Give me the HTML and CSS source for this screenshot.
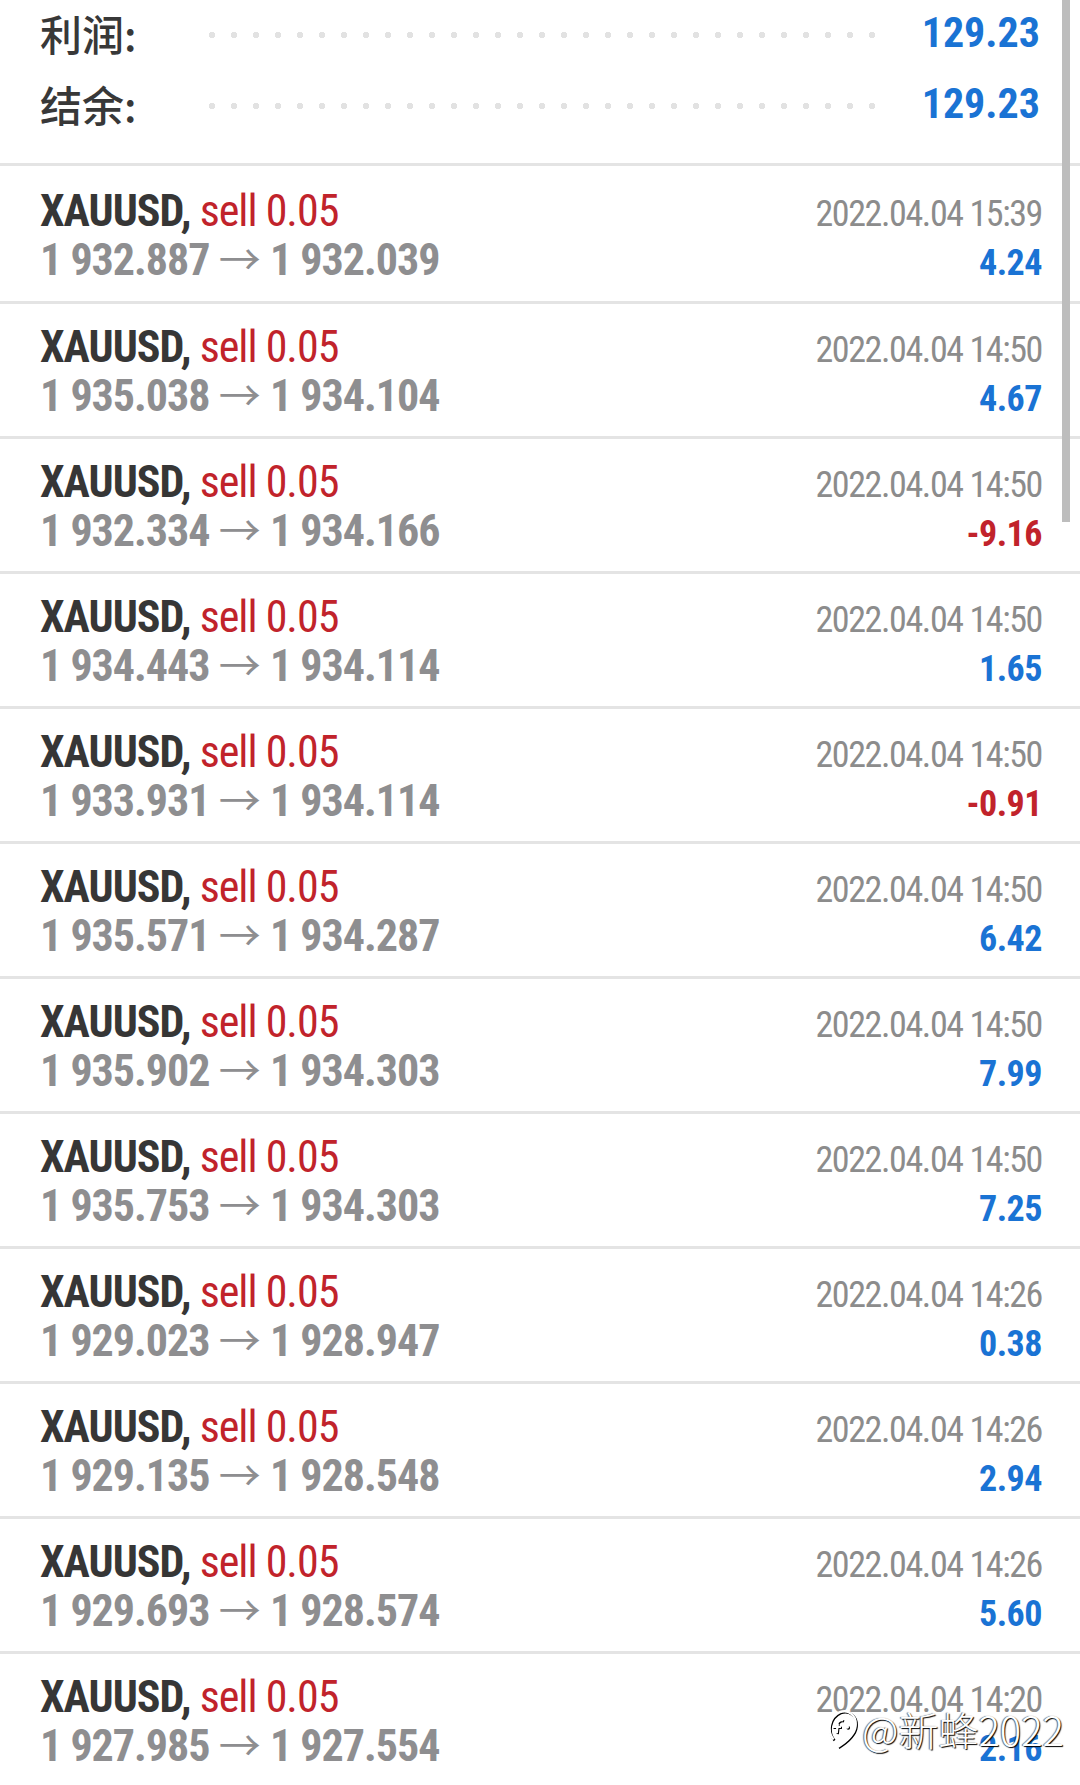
FILE: index.html
```html
<!DOCTYPE html>
<html lang="zh-CN">
<head>
  <meta charset="UTF-8">
  <meta name="viewport" content="width=device-width, initial-scale=1.0">
  <title>历史</title>
  <link rel="stylesheet" href="styles.css">
</head>
<body>

  <div class="summary">
    <div class="summary-row">
      <span class="summary-label">利润:</span>
      <span class="leader"></span>
      <span class="summary-value">129.23</span>
    </div>
    <div class="summary-row">
      <span class="summary-label">结余:</span>
      <span class="leader"></span>
      <span class="summary-value">129.23</span>
    </div>
  </div>

  <ul class="deals">
    <li class="deal">
      <div class="deal-title">XAUUSD, <span class="sell">sell 0.05</span></div>
      <div class="deal-time">2022.04.04 15:39</div>
      <div class="deal-price">1 932.887 <span class="arrow">→</span> 1 932.039</div>
      <div class="deal-profit">4.24</div>
    </li>
    <li class="deal">
      <div class="deal-title">XAUUSD, <span class="sell">sell 0.05</span></div>
      <div class="deal-time">2022.04.04 14:50</div>
      <div class="deal-price">1 935.038 <span class="arrow">→</span> 1 934.104</div>
      <div class="deal-profit">4.67</div>
    </li>
    <li class="deal">
      <div class="deal-title">XAUUSD, <span class="sell">sell 0.05</span></div>
      <div class="deal-time">2022.04.04 14:50</div>
      <div class="deal-price">1 932.334 <span class="arrow">→</span> 1 934.166</div>
      <div class="deal-profit loss">-9.16</div>
    </li>
    <li class="deal">
      <div class="deal-title">XAUUSD, <span class="sell">sell 0.05</span></div>
      <div class="deal-time">2022.04.04 14:50</div>
      <div class="deal-price">1 934.443 <span class="arrow">→</span> 1 934.114</div>
      <div class="deal-profit">1.65</div>
    </li>
    <li class="deal">
      <div class="deal-title">XAUUSD, <span class="sell">sell 0.05</span></div>
      <div class="deal-time">2022.04.04 14:50</div>
      <div class="deal-price">1 933.931 <span class="arrow">→</span> 1 934.114</div>
      <div class="deal-profit loss">-0.91</div>
    </li>
    <li class="deal">
      <div class="deal-title">XAUUSD, <span class="sell">sell 0.05</span></div>
      <div class="deal-time">2022.04.04 14:50</div>
      <div class="deal-price">1 935.571 <span class="arrow">→</span> 1 934.287</div>
      <div class="deal-profit">6.42</div>
    </li>
    <li class="deal">
      <div class="deal-title">XAUUSD, <span class="sell">sell 0.05</span></div>
      <div class="deal-time">2022.04.04 14:50</div>
      <div class="deal-price">1 935.902 <span class="arrow">→</span> 1 934.303</div>
      <div class="deal-profit">7.99</div>
    </li>
    <li class="deal">
      <div class="deal-title">XAUUSD, <span class="sell">sell 0.05</span></div>
      <div class="deal-time">2022.04.04 14:50</div>
      <div class="deal-price">1 935.753 <span class="arrow">→</span> 1 934.303</div>
      <div class="deal-profit">7.25</div>
    </li>
    <li class="deal">
      <div class="deal-title">XAUUSD, <span class="sell">sell 0.05</span></div>
      <div class="deal-time">2022.04.04 14:26</div>
      <div class="deal-price">1 929.023 <span class="arrow">→</span> 1 928.947</div>
      <div class="deal-profit">0.38</div>
    </li>
    <li class="deal">
      <div class="deal-title">XAUUSD, <span class="sell">sell 0.05</span></div>
      <div class="deal-time">2022.04.04 14:26</div>
      <div class="deal-price">1 929.135 <span class="arrow">→</span> 1 928.548</div>
      <div class="deal-profit">2.94</div>
    </li>
    <li class="deal">
      <div class="deal-title">XAUUSD, <span class="sell">sell 0.05</span></div>
      <div class="deal-time">2022.04.04 14:26</div>
      <div class="deal-price">1 929.693 <span class="arrow">→</span> 1 928.574</div>
      <div class="deal-profit">5.60</div>
    </li>
    <li class="deal">
      <div class="deal-title">XAUUSD, <span class="sell">sell 0.05</span></div>
      <div class="deal-time">2022.04.04 14:20</div>
      <div class="deal-price">1 927.985 <span class="arrow">→</span> 1 927.554</div>
      <div class="deal-profit">2.16</div>
    </li>
  </ul>

  <!-- 스크롤바 -->
  <div class="scrollbar"></div>

  <!-- 워터마크 -->
  <div class="watermark">
    <svg class="watermark-logo" width="32" height="40" viewBox="0 0 30 38">
      <path d="M7 29 C1 22 2 8 13 3 C21 0 29 6 28 16 C27 25 19 31 11 36" fill="none" stroke="#fff" stroke-width="2.2"/>
      <path d="M10 15 C11 11 14 10 16 11 M11 14 L10 23 M6 17 L14 17" fill="none" stroke="#fff" stroke-width="2.2"/>
      <circle cx="20" cy="17" r="1.7" fill="#fff"/>
    </svg>
    <span>@新蜂2022</span>
  </div>

</body>
</html>
```

FILE: styles.css
```css
* {
  box-sizing: border-box;
  margin: 0;
  padding: 0;
}
body {
  position: relative;
  width: 1080px;
  min-height: 1785px;
  overflow: hidden;
  background: #fff;
  font-family: "Roboto Condensed", "Liberation Sans Narrow", "DejaVu Sans Condensed", Roboto, "Noto Sans CJK SC", sans-serif;
  font-stretch: condensed;
  color: #363636;
}

/* 상단 요약 */
.summary {
  display: flex;
  flex-direction: column;
  gap: 7px;
  height: 166px;
  padding: 0 40px;
  border-bottom: 3px solid #e4e4e4;
}
.summary-row {
  display: flex;
  align-items: center;
  height: 64px;
}
.summary-label {
  font-family: "Noto Sans CJK SC", sans-serif;
  font-size: 42px;
  font-weight: 500;
  color: #383838;
}
.leader {
  flex: 1;
  height: 8px;
  margin: 6px 36px 0 64px;
  background: radial-gradient(circle, #e2e2e2 3px, transparent 3.5px) left center / 22px 8px repeat-x;
}
.summary-value {
  font-size: 42px;
  font-weight: bold;
  color: #1a73d4;
}

/* 거래 목록 */
.deals {
  list-style: none;
}
.deal {
  display: grid;
  grid-template-columns: 1fr auto;
  grid-auto-rows: 49px;
  align-items: baseline;
  height: 135px;
  padding: 19px 38px 0 40px;
  line-height: 49px;
  border-bottom: 3px solid #e4e4e4;
}
.deal:first-child {
  height: 138px;
  padding-top: 21px;
}
.deal-title {
  font-size: 44px;
  font-weight: bold;
  letter-spacing: -1px;
  color: #363636;
}
.sell {
  font-weight: normal;
  color: #c1232b;
}
.deal-price {
  font-size: 44px;
  font-weight: bold;
  letter-spacing: -1px;
  color: #8e8e90;
}
.arrow {
  font-family: "Noto Sans CJK SC", sans-serif;
  font-weight: normal;
  font-size: 42px;
  line-height: 1;
  letter-spacing: 0;
}
.deal-time {
  font-size: 36px;
  font-weight: normal;
  letter-spacing: -1.4px;
  color: #8c8c8c;
  text-align: right;
}
.deal-profit {
  font-size: 36px;
  font-weight: bold;
  letter-spacing: -0.5px;
  color: #1a73d4;
  text-align: right;
}
.deal-profit.loss {
  color: #c1232b;
}

.scrollbar {
  position: absolute;
  top: 0;
  left: 1062px;
  width: 8px;
  height: 522px;
  background: #bdbdbd;
}

.watermark {
  position: absolute;
  left: 826px;
  top: 1700px;
  display: flex;
  align-items: center;
  gap: 4px;
  font-family: "Noto Sans CJK SC", sans-serif;
  font-size: 40px;
  font-weight: 300;
  color: #fff;
  text-shadow: 1px 1px 1px #000, -1px 0 1px rgba(0, 0, 0, 0.6);
}
.watermark-logo {
  filter: drop-shadow(1px 1px 0 #000);
}
```
